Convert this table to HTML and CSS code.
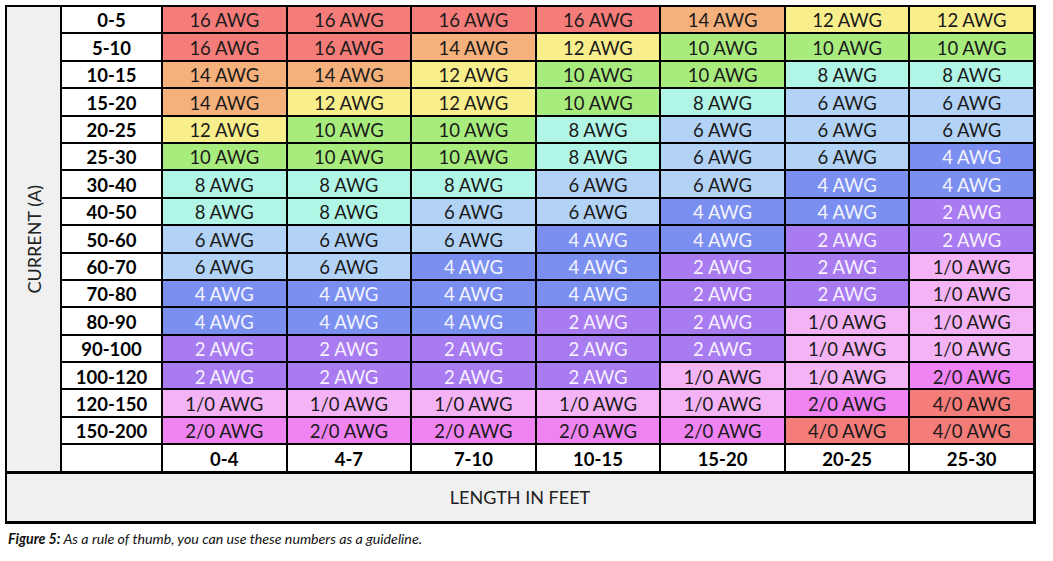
FILE: index.html
```html
<!DOCTYPE html>
<html lang="en">
<head>
<meta charset="utf-8">
<title>Wire gauge chart</title>
<link rel="stylesheet" href="styles.css">
</head>
<body>
<div class="page">
  <div class="chart">
    <div class="top">
      <div class="side"><span class="side-label">CURRENT (A)</span></div>
      <div class="grid">
        <div class="lbl">0-5</div><div class="c g16">16 AWG</div><div class="c g16">16 AWG</div><div class="c g16">16 AWG</div><div class="c g16">16 AWG</div><div class="c g14">14 AWG</div><div class="c g12">12 AWG</div><div class="c g12">12 AWG</div>
        <div class="lbl">5-10</div><div class="c g16">16 AWG</div><div class="c g16">16 AWG</div><div class="c g14">14 AWG</div><div class="c g12">12 AWG</div><div class="c g10">10 AWG</div><div class="c g10">10 AWG</div><div class="c g10">10 AWG</div>
        <div class="lbl">10-15</div><div class="c g14">14 AWG</div><div class="c g14">14 AWG</div><div class="c g12">12 AWG</div><div class="c g10">10 AWG</div><div class="c g10">10 AWG</div><div class="c g8">8 AWG</div><div class="c g8">8 AWG</div>
        <div class="lbl">15-20</div><div class="c g14">14 AWG</div><div class="c g12">12 AWG</div><div class="c g12">12 AWG</div><div class="c g10">10 AWG</div><div class="c g8">8 AWG</div><div class="c g6">6 AWG</div><div class="c g6">6 AWG</div>
        <div class="lbl">20-25</div><div class="c g12">12 AWG</div><div class="c g10">10 AWG</div><div class="c g10">10 AWG</div><div class="c g8">8 AWG</div><div class="c g6">6 AWG</div><div class="c g6">6 AWG</div><div class="c g6">6 AWG</div>
        <div class="lbl">25-30</div><div class="c g10">10 AWG</div><div class="c g10">10 AWG</div><div class="c g10">10 AWG</div><div class="c g8">8 AWG</div><div class="c g6">6 AWG</div><div class="c g6">6 AWG</div><div class="c g4">4 AWG</div>
        <div class="lbl">30-40</div><div class="c g8">8 AWG</div><div class="c g8">8 AWG</div><div class="c g8">8 AWG</div><div class="c g6">6 AWG</div><div class="c g6">6 AWG</div><div class="c g4">4 AWG</div><div class="c g4">4 AWG</div>
        <div class="lbl">40-50</div><div class="c g8">8 AWG</div><div class="c g8">8 AWG</div><div class="c g6">6 AWG</div><div class="c g6">6 AWG</div><div class="c g4">4 AWG</div><div class="c g4">4 AWG</div><div class="c g2">2 AWG</div>
        <div class="lbl">50-60</div><div class="c g6">6 AWG</div><div class="c g6">6 AWG</div><div class="c g6">6 AWG</div><div class="c g4">4 AWG</div><div class="c g4">4 AWG</div><div class="c g2">2 AWG</div><div class="c g2">2 AWG</div>
        <div class="lbl">60-70</div><div class="c g6">6 AWG</div><div class="c g6">6 AWG</div><div class="c g4">4 AWG</div><div class="c g4">4 AWG</div><div class="c g2">2 AWG</div><div class="c g2">2 AWG</div><div class="c g1o">1/0 AWG</div>
        <div class="lbl">70-80</div><div class="c g4">4 AWG</div><div class="c g4">4 AWG</div><div class="c g4">4 AWG</div><div class="c g4">4 AWG</div><div class="c g2">2 AWG</div><div class="c g2">2 AWG</div><div class="c g1o">1/0 AWG</div>
        <div class="lbl">80-90</div><div class="c g4">4 AWG</div><div class="c g4">4 AWG</div><div class="c g4">4 AWG</div><div class="c g2">2 AWG</div><div class="c g2">2 AWG</div><div class="c g1o">1/0 AWG</div><div class="c g1o">1/0 AWG</div>
        <div class="lbl">90-100</div><div class="c g2">2 AWG</div><div class="c g2">2 AWG</div><div class="c g2">2 AWG</div><div class="c g2">2 AWG</div><div class="c g2">2 AWG</div><div class="c g1o">1/0 AWG</div><div class="c g1o">1/0 AWG</div>
        <div class="lbl">100-120</div><div class="c g2">2 AWG</div><div class="c g2">2 AWG</div><div class="c g2">2 AWG</div><div class="c g2">2 AWG</div><div class="c g1o">1/0 AWG</div><div class="c g1o">1/0 AWG</div><div class="c g2o">2/0 AWG</div>
        <div class="lbl">120-150</div><div class="c g1o">1/0 AWG</div><div class="c g1o">1/0 AWG</div><div class="c g1o">1/0 AWG</div><div class="c g1o">1/0 AWG</div><div class="c g1o">1/0 AWG</div><div class="c g2o">2/0 AWG</div><div class="c g4o">4/0 AWG</div>
        <div class="lbl">150-200</div><div class="c g2o">2/0 AWG</div><div class="c g2o">2/0 AWG</div><div class="c g2o">2/0 AWG</div><div class="c g2o">2/0 AWG</div><div class="c g2o">2/0 AWG</div><div class="c g4o">4/0 AWG</div><div class="c g4o">4/0 AWG</div>
        <div class="lbl"></div><div class="lbl">0-4</div><div class="lbl">4-7</div><div class="lbl">7-10</div><div class="lbl">10-15</div><div class="lbl">15-20</div><div class="lbl">20-25</div><div class="lbl">25-30</div>
      </div>
    </div>
    <div class="bottom">LENGTH IN FEET</div>
  </div>
  <p class="caption"><b>Figure 5:</b> As a rule of thumb, you can use these numbers as a guideline.</p>
</div>
</body>
</html>
```

FILE: styles.css
```css
html, body {
  margin: 0;
  padding: 0;
  background: #fff;
}
.page {
  padding: 5px 0 0 5px;
  font-family: Lato, "Open Sans", sans-serif;
  color: #111;
}
.chart {
  width: 1031px;
  box-sizing: border-box;
  border-style: solid;
  border-color: #000;
  border-width: 2px 3px 3px 2px;
}
.top {
  display: flex;
}
.side {
  width: 53px;
  flex: none;
  background: #f0f0f0;
  border-right: 2px solid #000;
  display: flex;
  align-items: center;
  justify-content: center;
}
.side-label {
  writing-mode: vertical-rl;
  transform: rotate(180deg);
  font-size: 18px;
  color: #222;
}
.grid {
  flex: 1;
  display: grid;
  grid-template-columns: 99px repeat(7, 1fr);
  grid-auto-rows: 25.4px;
  gap: 2px;
  background: #000;
}
.grid > div {
  display: flex;
  align-items: center;
  justify-content: center;
  font-size: 18.5px;
  line-height: 1;
  padding-top: 2px;
  box-sizing: border-box;
}
.lbl {
  background: #fff;
  font-weight: 700;
  color: #000;
}
.c { color: #1a1a1a; }
.g16, .g4o { background: #f47d79; }
.g14 { background: #f5b17b; }
.g12 { background: #f8ee8c; }
.g10 { background: #a9ec7e; }
.g8  { background: #b1f5e6; }
.g6  { background: #b2d3f6; }
.g4  { background: #7b8ff0; color: #f4f4ff; }
.g2  { background: #a87bf1; color: #f7f0ff; }
.g1o { background: #f4b3f4; }
.g2o { background: #ee83f1; }
.bottom {
  border-top: 3px solid #000;
  background: #f0f0f0;
  height: 47px;
  display: flex;
  align-items: center;
  justify-content: center;
  font-size: 18px;
  color: #222;
}
.caption {
  margin: 6px 0 0 3px;
  font-size: 14.2px;
  font-style: italic;
  color: #111;
}
.caption b {
  font-weight: 700;
}
```
